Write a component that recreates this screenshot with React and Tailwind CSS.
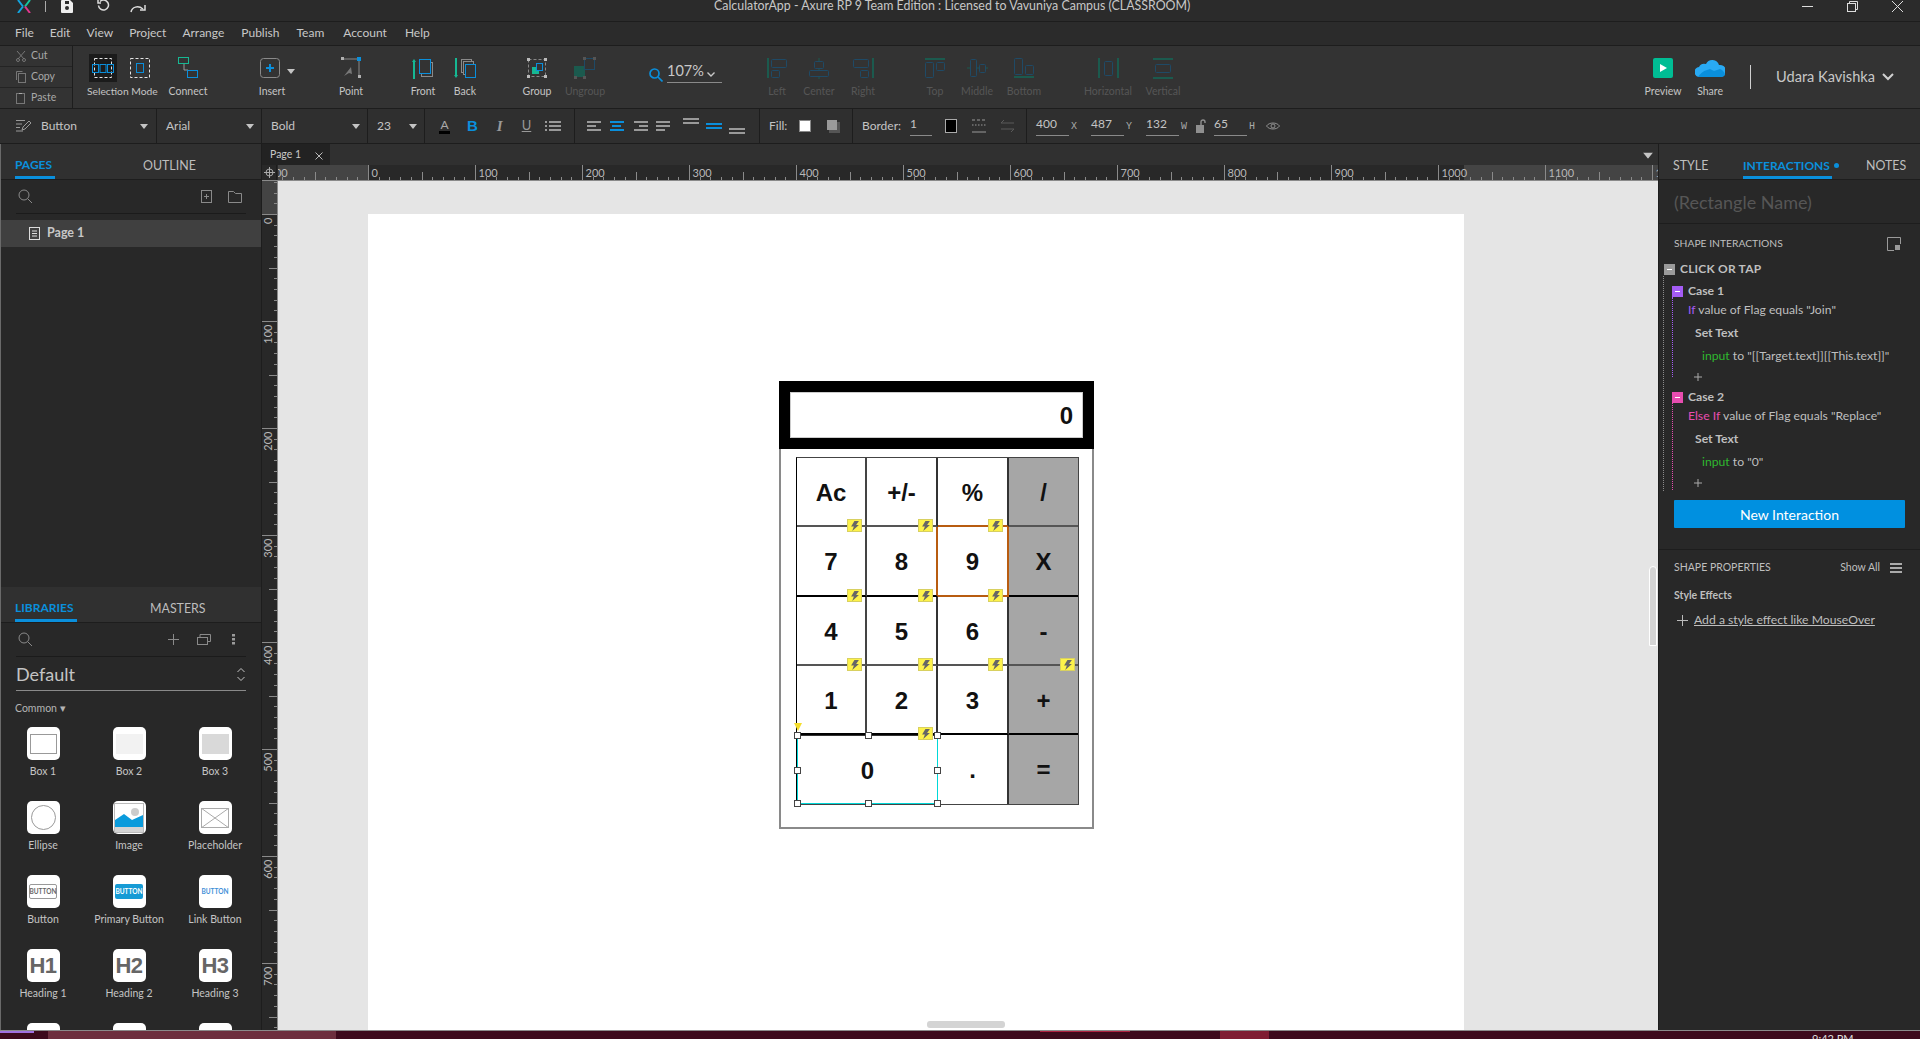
import { Fragment } from "react";

const Caret = ({ className = "" }) => (
  <svg width="8" height="5" viewBox="0 0 8 5" className={className}>
    <path d="M0 0h8L4 5z" fill="#c4c4c4" />
  </svg>
);

const Search = ({ className = "" }) => (
  <svg width="15" height="15" viewBox="0 0 15 15" fill="none" stroke="#8a8a8a" className={className}>
    <circle cx="6" cy="6" r="5" />
    <path d="M9.7 9.7 14 14" />
  </svg>
);

function Logo() {
  return (
    <svg width="14" height="14" viewBox="0 0 14 14" fill="none" strokeWidth="2">
      <path d="M1 0 6 6.5" stroke="#12a5e0" />
      <path d="M6 6.5 1 13" stroke="#12a5e0" />
      <path d="M13 0 8 6.5" stroke="#16c6a0" />
      <path d="M8 6.5 13 13" stroke="#e2378f" />
    </svg>
  );
}

const ICON_BLUE = "#0a8fdc";
const DIM_BLUE = "#1f4a66";
const DIM_GREEN = "#1b5a4e";

const Dash = ({ x, y, w, h }) => (
  <rect x={x} y={y} width={w} height={h} fill="none" stroke="#e4e4e4" strokeDasharray="3 2" />
);

function SelectionIcons() {
  return (
    <div className="flex items-center h-[28px]">
      <div className="w-[28px] h-[28px] ml-[16px] bg-[#1b1b1b] flex items-center justify-center">
        <svg width="22" height="20" viewBox="0 0 22 20" fill="none">
          <Dash x="2.5" y="0.5" w="17" h="19" />
          <rect x="0.5" y="6.5" width="6" height="8" stroke={ICON_BLUE} />
          <rect x="8" y="6.5" width="6" height="8" stroke={ICON_BLUE} />
          <rect x="15.5" y="6.5" width="6" height="8" stroke={ICON_BLUE} />
        </svg>
      </div>
      <svg width="20" height="20" viewBox="0 0 20 20" fill="none" className="ml-[13px]">
        <Dash x="0.5" y="0.5" w="19" h="19" />
        <rect x="6.5" y="5.5" width="7" height="9" stroke={ICON_BLUE} />
      </svg>
    </div>
  );
}

const ConnectIcon = () => (
  <svg width="20" height="22" viewBox="0 0 20 22" fill="none">
    <rect x="0.5" y="0.5" width="10" height="6" stroke="#16b893" />
    <path d="M6 7v6h4" stroke="#9a9a9a" />
    <rect x="9.5" y="13.5" width="10" height="7" stroke={ICON_BLUE} />
  </svg>
);

const InsertIcon = () => (
  <div className="flex items-center relative left-[-2px]">
    <svg width="20" height="20" viewBox="0 0 20 20" fill="none">
      <rect x="0.5" y="0.5" width="19" height="19" rx="3" stroke="#8a8a8a" />
      <path d="M10 6v8M6 10h8" stroke={ICON_BLUE} strokeWidth="2" />
    </svg>
    <Caret className="absolute left-[27px] top-[11px]" />
  </div>
);

const PointIcon = () => (
  <svg width="20" height="22" viewBox="0 0 20 22" fill="none">
    <path d="M2 2h16v18" stroke="#8a8a8a" />
    <rect x="0" y="0" width="3" height="3" fill="#b0b0b0" />
    <rect x="16" y="0" width="4" height="4" fill={ICON_BLUE} />
    <rect x="17" y="18" width="3" height="3" fill="#b0b0b0" />
    <path d="M3 19 10 10l1 7-3-1z" fill="#777" />
  </svg>
);

const FrontIcon = () => (
  <svg width="22" height="22" viewBox="0 0 22 22" fill="none">
    <path d="M2 22V4" stroke="#16b893" strokeWidth="2" />
    <path d="M0 5l2-3 2 3z" fill="#16b893" />
    <rect x="9.5" y="5.5" width="11" height="14" stroke="#8a8a8a" />
    <rect x="7.5" y="2.5" width="11" height="14" fill="#333" stroke={ICON_BLUE} />
  </svg>
);

const BackIcon = () => (
  <svg width="22" height="22" viewBox="0 0 22 22" fill="none">
    <path d="M2 1v18" stroke="#16b893" strokeWidth="2" />
    <path d="M0 18l2 3 2-3z" fill="#16b893" />
    <rect x="7.5" y="2.5" width="10" height="13" stroke="#8a8a8a" />
    <rect x="9.5" y="4.5" width="10" height="13" fill="#333" stroke="#8a8a8a" />
    <rect x="11.5" y="7.5" width="10" height="13" fill="#333" stroke={ICON_BLUE} />
  </svg>
);

const GroupIcon = () => (
  <svg width="20" height="20" viewBox="0 0 20 20" fill="none">
    <rect x="1.5" y="1.5" width="17" height="17" stroke="#888" strokeDasharray="3 2" />
    <rect x="0" y="0" width="3" height="3" fill="#bbb" />
    <rect x="17" y="0" width="3" height="3" fill="#bbb" />
    <rect x="0" y="17" width="3" height="3" fill="#bbb" />
    <rect x="17" y="17" width="3" height="3" fill="#bbb" />
    <rect x="5" y="9" width="7" height="7" fill="#16b893" />
    <rect x="9.5" y="5.5" width="6" height="7" fill="#333" stroke={ICON_BLUE} />
  </svg>
);

const UngroupIcon = () => (
  <svg width="22" height="22" viewBox="0 0 22 22" fill="none">
    <rect x="0" y="9" width="11" height="11" fill={DIM_GREEN} />
    <rect x="10.5" y="1.5" width="10" height="11" stroke={DIM_BLUE} />
    <rect x="9" y="0" width="3" height="3" fill="#555" />
    <rect x="19" y="0" width="3" height="3" fill="#555" />
    <rect x="0" y="19" width="3" height="3" fill="#555" />
    <rect x="9" y="19" width="3" height="3" fill="#555" />
  </svg>
);

const LeftIcon = () => (
  <svg width="20" height="20" viewBox="0 0 20 20" fill="none">
    <path d="M1 0v20" stroke={DIM_GREEN} strokeWidth="2" />
    <rect x="4.5" y="1.5" width="15" height="8" rx="1" stroke={DIM_BLUE} />
    <rect x="4.5" y="12.5" width="8" height="7" rx="1" stroke={DIM_BLUE} />
  </svg>
);

const CenterIcon = () => (
  <svg width="20" height="21" viewBox="0 0 20 21" fill="none">
    <path d="M10 0v21" stroke={DIM_GREEN} />
    <rect x="5.5" y="3.5" width="9" height="7" rx="1" fill="#333" stroke={DIM_BLUE} />
    <rect x="0.5" y="12.5" width="19" height="6" rx="1" fill="#333" stroke={DIM_BLUE} />
  </svg>
);

const RightIcon = () => (
  <svg width="21" height="20" viewBox="0 0 21 20" fill="none">
    <path d="M20 0v20" stroke={DIM_GREEN} strokeWidth="2" />
    <rect x="0.5" y="1.5" width="15" height="8" rx="1" stroke={DIM_BLUE} />
    <rect x="7.5" y="12.5" width="8" height="7" rx="1" stroke={DIM_BLUE} />
  </svg>
);

const TopIcon = () => (
  <svg width="20" height="20" viewBox="0 0 20 20" fill="none">
    <path d="M0 1h20" stroke={DIM_GREEN} strokeWidth="2" />
    <rect x="0.5" y="4.5" width="8" height="15" rx="1" stroke={DIM_BLUE} />
    <rect x="11.5" y="4.5" width="8" height="8" rx="1" stroke={DIM_BLUE} />
  </svg>
);

const MiddleIcon = () => (
  <svg width="21" height="20" viewBox="0 0 21 20" fill="none">
    <path d="M0 10h21" stroke={DIM_GREEN} />
    <rect x="3.5" y="1.5" width="6" height="17" rx="1" fill="#333" stroke={DIM_BLUE} />
    <rect x="12.5" y="6.5" width="6" height="8" rx="1" fill="#333" stroke={DIM_BLUE} />
  </svg>
);

const BottomIcon = () => (
  <svg width="20" height="20" viewBox="0 0 20 20" fill="none">
    <path d="M0 19h20" stroke={DIM_GREEN} strokeWidth="2" />
    <rect x="0.5" y="0.5" width="8" height="16" rx="1" stroke={DIM_BLUE} />
    <rect x="11.5" y="7.5" width="8" height="9" rx="1" stroke={DIM_BLUE} />
  </svg>
);

const HorizontalIcon = () => (
  <svg width="21" height="20" viewBox="0 0 21 20" fill="none">
    <path d="M1 0v20M20 0v20" stroke={DIM_GREEN} strokeWidth="2" />
    <rect x="6.5" y="3.5" width="8" height="14" rx="1" stroke={DIM_BLUE} />
  </svg>
);

const VerticalIcon = () => (
  <svg width="20" height="21" viewBox="0 0 20 21" fill="none">
    <path d="M0 1h20M0 20h20" stroke={DIM_GREEN} strokeWidth="2" />
    <rect x="2.5" y="6.5" width="15" height="8" rx="1" stroke={DIM_BLUE} />
  </svg>
);

const PreviewIcon = () => (
  <div className="w-[20px] h-[20px] rounded-[2px] bg-[#00bd94] flex items-center justify-center">
    <svg width="7" height="8" viewBox="0 0 7 8">
      <path d="M0 0l7 4-7 4z" fill="#fff" />
    </svg>
  </div>
);

const CloudIcon = () => (
  <svg width="30" height="20" viewBox="0 0 30 20">
    <path d="M5 19a5 5 0 0 1-1-10 6 6 0 0 1 7-3 7 7 0 0 1 13 1 6 6 0 0 1 2 12z" fill="#29aaf4" />
    <path d="M3 19c2-3 5-6 9-7l3-1 4 2 6-2c3 1 5 4 5 6-1 1-2 2-4 2z" fill="#0a8fdc" />
  </svg>
);

function Tool({ label, dim, className = "", children }) {
  return (
    <div className={`w-[40px] flex flex-col items-center relative ${className}`}>
      <div className="h-[28px] flex items-center justify-center">{children}</div>
      <span className={`mt-[2px] text-[10.5px] leading-[14px] whitespace-nowrap ${dim ? "text-[#565656]" : "text-[#c4c4c4]"}`}>
        {label}
      </span>
    </div>
  );
}

function TitleBar() {
  return (
    <div className="h-[22px] shrink-0 bg-[#2b2b2b] border-b border-[#1d1d1d] flex items-start relative overflow-hidden">
      <div className="ml-[17px] flex items-center h-[13px] overflow-hidden">
        <Logo />
      </div>
      <div className="ml-[14px] w-px h-[11px] mt-px bg-[#aaa]" />
      <svg width="13" height="13" viewBox="0 0 13 13" className="ml-[15px]">
        <path d="M1 0h8l3 3v9a1 1 0 0 1-1 1H1a1 1 0 0 1-1-1V1a1 1 0 0 1 1-1z" fill="#eee" />
        <rect x="4" y="1" width="4" height="3" fill="#2b2b2b" />
        <circle cx="6" cy="8" r="2" fill="#2b2b2b" />
      </svg>
      <svg width="13" height="13" viewBox="0 0 13 13" fill="none" stroke="#ddd" strokeWidth="1.5" className="ml-[23px]">
        <path d="M3 1.5a5 5 0 1 1-1.5 4" />
        <path d="M1 0v3h3" />
      </svg>
      <svg width="16" height="10" viewBox="0 0 16 10" fill="none" stroke="#ddd" strokeWidth="1.5" className="ml-[20px] mt-[3px]">
        <path d="M1 9c1-5 7-7 12-3" />
        <path d="M15 2v5h-5" />
      </svg>
      <span className="absolute left-[714px] top-0 text-[12.4px] leading-[12px] text-[#c8c8c8] whitespace-nowrap">
        CalculatorApp - Axure RP 9 Team Edition : Licensed to Vavuniya Campus (CLASSROOM)
      </span>
      <div className="ml-auto flex items-start mr-[17px]">
        <div className="w-[11px] h-px mt-[6px] bg-[#ddd]" />
        <svg width="11" height="11" viewBox="0 0 11 11" fill="none" stroke="#ddd" className="ml-[34px] mt-px">
          <rect x="0.5" y="2.5" width="8" height="8" />
          <path d="M2.5 2.5v-2h8v8h-2" />
        </svg>
        <svg width="11" height="11" viewBox="0 0 11 11" fill="none" stroke="#ddd" className="ml-[34px] mt-px">
          <path d="M0 0l11 11M11 0 0 11" />
        </svg>
      </div>
    </div>
  );
}

function MenuBar() {
  const items = [
    { label: "File" },
    { label: "Edit" },
    { label: "View" },
    { label: "Project" },
    { label: "Arrange" },
    { label: "Publish", cls: "ml-px" },
    { label: "Team", cls: "ml-px" },
    { label: "Account", cls: "ml-[3px]" },
    { label: "Help", cls: "ml-[2px]" },
  ];
  return (
    <div className="h-[24px] shrink-0 bg-[#2b2b2b] border-b border-[#1d1d1d] flex items-center gap-[16px] pl-[15px] pb-[1px]">
      {items.map((item) => (
        <span key={item.label} className={`text-[12px] text-[#c8c8c8] ${item.cls || ""}`}>
          {item.label}
        </span>
      ))}
    </div>
  );
}

function Clipboard() {
  const rows = [
    {
      label: "Cut",
      icon: (
        <svg width="10" height="11" viewBox="0 0 10 11" fill="none" stroke="#777">
          <path d="M1 0l7 8M9 0 2 8" />
          <circle cx="2" cy="9" r="1.5" />
          <circle cx="8" cy="9" r="1.5" />
        </svg>
      ),
    },
    {
      label: "Copy",
      icon: (
        <svg width="10" height="12" viewBox="0 0 10 12" fill="none" stroke="#777">
          <rect x="2.5" y="2.5" width="7" height="9" />
          <path d="M0.5 9V0.5h6" />
        </svg>
      ),
    },
    {
      label: "Paste",
      icon: (
        <svg width="10" height="12" viewBox="0 0 10 12" fill="none" stroke="#777">
          <rect x="0.5" y="1.5" width="8" height="10" />
          <path d="M3 1.5h3" stroke="#aaa" />
        </svg>
      ),
    },
  ];
  return (
    <div className="w-[73px] shrink-0 border-r border-[#1d1d1d] flex flex-col">
      {rows.map((row, i) => (
        <div key={row.label} className={`flex-1 flex items-center gap-[5px] pl-[16px] ${i < 2 ? "border-b border-[#242424]" : ""}`}>
          {row.icon}
          <span className="text-[10.5px] text-[#a8a8a8]">{row.label}</span>
        </div>
      ))}
    </div>
  );
}

function Toolbar() {
  return (
    <div className="h-[63px] shrink-0 bg-[#333333] border-b border-[#1d1d1d] flex">
      <Clipboard />
      <div className="flex-1 flex pt-[8px]">
        <div className="w-[95px] flex flex-col">
          <SelectionIcons />
          <span className="mt-[2px] pl-[14px] text-[10.3px] leading-[14px] text-[#c4c4c4] whitespace-nowrap">Selection Mode</span>
        </div>
        <Tool label="Connect"><ConnectIcon /></Tool>
        <Tool label="Insert" className="ml-[44px]"><InsertIcon /></Tool>
        <Tool label="Point" className="ml-[39px]"><PointIcon /></Tool>
        <Tool label="Front" className="ml-[32px]"><FrontIcon /></Tool>
        <Tool label="Back" className="ml-[2px]"><BackIcon /></Tool>
        <Tool label="Group" className="ml-[32px]"><GroupIcon /></Tool>
        <Tool label="Ungroup" dim className="ml-[8px]"><UngroupIcon /></Tool>
        <div className="w-[73px] ml-[44px] h-[21px] mt-[8px] flex items-center">
          <svg width="14" height="14" viewBox="0 0 14 14" fill="none" stroke={ICON_BLUE} strokeWidth="1.7" className="mt-[4px] shrink-0">
            <circle cx="5.5" cy="5.5" r="4.5" />
            <path d="M9 9l4.5 4.5" />
          </svg>
          <div className="ml-[4px] flex-1 h-full border-b border-[#8a8a8a] flex items-center gap-[3px] pb-[2px]">
            <span className="text-[14.5px] text-[#c8c8c8]">107%</span>
            <svg width="8" height="5" viewBox="0 0 8 5" fill="none" stroke="#c8c8c8" strokeWidth="1.4" className="mt-[7px]">
              <path d="M0.5 0.5 4 4l3.500-3.500" />
            </svg>
          </div>
        </div>
        <Tool label="Left" dim className="ml-[35px]"><LeftIcon /></Tool>
        <Tool label="Center" dim className="ml-[2px]"><CenterIcon /></Tool>
        <Tool label="Right" dim className="ml-[4px]"><RightIcon /></Tool>
        <Tool label="Top" dim className="ml-[32px]"><TopIcon /></Tool>
        <Tool label="Middle" dim className="ml-[2px]"><MiddleIcon /></Tool>
        <Tool label="Bottom" dim className="ml-[7px]"><BottomIcon /></Tool>
        <Tool label="Horizontal" dim className="ml-[44px]"><HorizontalIcon /></Tool>
        <Tool label="Vertical" dim className="ml-[15px]"><VerticalIcon /></Tool>
        <div className="ml-auto flex">
          <Tool label="Preview"><PreviewIcon /></Tool>
          <Tool label="Share" className="ml-[7px]"><CloudIcon /></Tool>
          <div className="w-px h-[24px] mt-[11px] ml-[20px] bg-[#d0d0d0]" />
          <div className="flex items-center h-[24px] mt-[11px] ml-[25px] mr-[26px]">
            <span className="text-[14.6px] text-[#c8c8c8] whitespace-nowrap">Udara Kavishka</span>
            <svg width="12" height="8" viewBox="0 0 12 8" fill="none" stroke="#d0d0d0" strokeWidth="2" className="ml-[7px]">
              <path d="M1 1l5 5 5-5" />
            </svg>
          </div>
        </div>
      </div>
    </div>
  );
}

const Bars = ({ rows, className = "", color = "#9a9a9a" }) => (
  <div className={`flex flex-col gap-[2px] ${className}`}>
    {rows.map((r, i) => (
      <div key={i} className="h-[2px]" style={{ width: r.w, marginLeft: r.l || 0, background: color }} />
    ))}
  </div>
);

function Select({ label, width, pad, caretClass }) {
  return (
    <div className="h-full shrink-0 border-r border-[#1d1d1d] flex items-center relative" style={{ width, paddingLeft: pad }}>
      <span className="text-[12px] text-[#c4c4c4]">{label}</span>
      <Caret className={`absolute top-[15px] ${caretClass}`} />
    </div>
  );
}

function NumField({ value, letter, className = "" }) {
  return (
    <div className={`flex items-center ${className}`}>
      <div className="w-[33px] h-[20px] border-b border-[#8a8a8a] text-[12px] leading-[15px] text-[#c4c4c4]">{value}</div>
      <span className="ml-[2px] w-[10px] text-[10px] text-[#aaa] font-['Liberation_Mono',monospace]">{letter}</span>
    </div>
  );
}

function FormatBar() {
  return (
    <div className="h-[35px] shrink-0 bg-[#2f2f2f] border-b border-[#1d1d1d] flex items-center">
      <div className="w-[157px] h-full shrink-0 border-r border-[#1d1d1d] flex items-center pl-[16px] relative">
        <svg width="15" height="14" viewBox="0 0 15 14" fill="none" stroke="#9a9a9a">
          <path d="M0 1.500h9M0 5h6M0 8.500h4M0 12h7" />
          <path d="M6 11l1-3 6-6 2 2-6 6z" />
        </svg>
        <span className="ml-[10px] text-[12px] text-[#c4c4c4]">Button</span>
        <Caret className="absolute top-[15px] left-[140px]" />
      </div>
      <Select label="Arial" width={105} pad={9} caretClass="left-[89px]" />
      <Select label="Bold" width={106} pad={9} caretClass="left-[90px]" />
      <Select label="23" width={57} pad={9} caretClass="left-[41px]" />
      <div className="w-[150px] h-full shrink-0 border-r border-[#1d1d1d] flex items-center pl-[14px]">
        <div className="w-[11px] flex flex-col items-center">
          <span className="text-[12px] leading-[11px] text-[#aaa]">A</span>
          <div className="w-[11px] h-[3px] bg-black mt-[1px]" />
        </div>
        <span className="ml-[17px] text-[15px] font-bold text-[#0a8fdc] font-['Liberation_Sans',sans-serif]">B</span>
        <span className="ml-[19px] text-[15px] italic font-bold text-[#999] font-['Liberation_Serif',serif]">I</span>
        <span className="ml-[19px] text-[13px] underline text-[#999]">U</span>
        <svg width="16" height="12" viewBox="0 0 16 12" className="ml-[14px]">
          <path d="M0 1h2v2H0zM0 5h2v2H0zM0 9h2v2H0zM4 1h12v2H4zM4 5h12v2H4zM4 9h12v2H4z" fill="#999" />
        </svg>
      </div>
      <div className="w-[185px] h-full shrink-0 border-r border-[#1d1d1d] flex items-center pl-[12px]">
        <Bars rows={[{ w: 14 }, { w: 9 }, { w: 14 }]} />
        <Bars color="#0a8fdc" className="ml-[9px]" rows={[{ w: 14 }, { w: 9, l: 2 }, { w: 14 }]} />
        <Bars className="ml-[10px]" rows={[{ w: 14 }, { w: 9, l: 5 }, { w: 14 }]} />
        <Bars className="ml-[8px]" rows={[{ w: 14 }, { w: 14 }, { w: 9 }]} />
        <Bars className="ml-[13px] mb-[10px]" rows={[{ w: 16 }, { w: 16 }]} />
        <Bars color="#0a8fdc" className="ml-[7px]" rows={[{ w: 16 }, { w: 16 }]} />
        <Bars className="ml-[7px] mt-[10px]" rows={[{ w: 16 }, { w: 16 }]} />
      </div>
      <div className="w-[93px] h-full shrink-0 border-r border-[#1d1d1d] flex items-center pl-[9px]">
        <span className="text-[12px] text-[#c4c4c4]">Fill:</span>
        <div className="ml-[12px] w-[12px] h-[12px] bg-white border border-[#888]" />
        <div className="ml-[16px] relative w-[13px] h-[13px]">
          <div className="absolute left-[2px] top-[2px] w-[11px] h-[11px] bg-[#555]" />
          <div className="absolute left-0 top-0 w-[10px] h-[10px] bg-[#9a9a9a]" />
        </div>
      </div>
      <div className="w-[174px] h-full shrink-0 border-r border-[#1d1d1d] flex items-center pl-[9px]">
        <span className="text-[12px] text-[#c4c4c4]">Border:</span>
        <div className="ml-[9px] w-[22px] h-[20px] border-b border-[#8a8a8a] text-[12px] leading-[15px] text-[#c4c4c4]">1</div>
        <div className="ml-[13px] w-[12px] h-[14px] bg-black border border-[#aaa]" />
        <svg width="15" height="14" viewBox="0 0 15 14" fill="none" stroke="#9a9a9a" className="ml-[15px]">
          <path d="M0 1h3M5 1h3M10 1h3M0 6h1.500M3 6h1.500M6 6h1.500M9 6h1.500M12 6h1.500M0 13h14" />
        </svg>
        <svg width="15" height="14" viewBox="0 0 15 14" fill="none" stroke="#5a5a5a" className="ml-[13px]">
          <path d="M1 4h13M1 4l3-3M1 10h13M14 10l-3 3" />
        </svg>
      </div>
      <NumField value="400" letter="X" className="ml-[9px]" />
      <NumField value="487" letter="Y" className="ml-[10px]" />
      <NumField value="132" letter="W" className="ml-[10px]" />
      <svg width="10" height="14" viewBox="0 0 10 14" fill="none" className="ml-[5px]">
        <rect x="0" y="6" width="8" height="8" fill="#8f8f8f" />
        <path d="M5 6V3a2 2 0 0 1 4 0v1" stroke="#8f8f8f" strokeWidth="1.4" />
      </svg>
      <NumField value="65" letter="H" className="ml-[8px]" />
      <svg width="14" height="10" viewBox="0 0 14 10" fill="none" stroke="#8f8f8f" className="ml-[7px]">
        <path d="M0.500 5C3 1 11 1 13.500 5 11 9 3 9 0.500 5z" />
        <circle cx="7" cy="5" r="2" />
      </svg>
    </div>
  );
}

function PanelTabs({ left, right, underlineClass, rightClass }) {
  return (
    <div className="h-[36px] shrink-0 bg-[#303030] border-b border-[#1d1d1d] relative flex items-center">
      <span className="ml-[14px] pt-[6px] text-[12px] font-bold text-[#0a8fdc]">{left}</span>
      <span className={`absolute top-[13px] text-[12.4px] text-[#bdbdbd] ${rightClass}`}>{right}</span>
      <div className={`absolute left-[14px] bottom-0 h-[3px] bg-[#0a8fdc] ${underlineClass}`} />
    </div>
  );
}

function LibTile({ label, children }) {
  return (
    <div className="h-[74px] flex flex-col items-center">
      <div className="w-[33px] h-[33px] rounded-[5px] bg-white flex items-center justify-center overflow-hidden shrink-0">{children}</div>
      <span className="mt-[4px] text-[10.5px] leading-[14px] text-[#c4c4c4] whitespace-nowrap">{label}</span>
    </div>
  );
}

const Heading = ({ children }) => (
  <span className="text-[22px] font-bold text-[#666] tracking-[-0.5px] font-['Liberation_Sans',sans-serif]">{children}</span>
);

function LeftPanel() {
  return (
    <div className="w-[262px] shrink-0 bg-[#282828] border-r border-[#1d1d1d] border-l border-l-[#6a6a6a] flex flex-col overflow-hidden">
      <div className="h-[443px] shrink-0 flex flex-col">
        <PanelTabs left="PAGES" right="OUTLINE" underlineClass="w-[40px]" rightClass="left-[142px]" />
        <div className="mx-[15px] h-[34px] border-b border-[#1b1b1b] flex items-center px-[2px] shrink-0">
          <Search />
          <svg width="13" height="13" viewBox="0 0 13 13" fill="none" stroke="#8a8a8a" className="ml-auto">
            <rect x="1.5" y="0.5" width="10" height="12" />
            <path d="M6.500 4v5M4 6.500h5" />
          </svg>
          <svg width="14" height="12" viewBox="0 0 14 12" fill="none" stroke="#8a8a8a" className="ml-[15px] mr-[2px]">
            <path d="M0.500 11.500V0.500h5l2 2h6v9z" />
          </svg>
        </div>
        <div className="h-[27px] mt-[6px] bg-[#404040] flex items-center pl-[28px] shrink-0">
          <svg width="11" height="13" viewBox="0 0 11 13" fill="none" stroke="#ddd">
            <rect x="0.500" y="0.500" width="10" height="12" />
            <path d="M3 4h5M3 6.500h5M3 9h5" />
          </svg>
          <span className="ml-[7px] text-[12.5px] font-bold text-[#c8c8c8]">Page 1</span>
        </div>
      </div>
      <div className="flex-1 min-h-0 flex flex-col overflow-hidden">
        <PanelTabs left="LIBRARIES" right="MASTERS" underlineClass="w-[62px]" rightClass="left-[149px]" />
        <div className="mx-[15px] h-[34px] border-b border-[#1b1b1b] flex items-center px-[2px] shrink-0">
          <Search />
          <svg width="11" height="11" viewBox="0 0 11 11" fill="none" stroke="#8a8a8a" className="ml-auto">
            <path d="M5.500 0v11M0 5.500h11" />
          </svg>
          <svg width="14" height="11" viewBox="0 0 14 11" fill="none" stroke="#8a8a8a" className="ml-[18px]">
            <rect x="0.500" y="3.500" width="10" height="7" />
            <path d="M3 3.500v-3h10.500v7h-3" />
          </svg>
          <svg width="3" height="11" viewBox="0 0 3 11" className="ml-[21px] mr-[9px]">
            <path d="M0 0h3v2.500H0zM0 4h3v2.500H0zM0 8h3v2.500H0z" fill="#9a9a9a" />
          </svg>
        </div>
        <div className="mx-[15px] h-[34px] pt-[2px] border-b border-[#8a8a8a] flex items-center justify-between shrink-0">
          <span className="text-[18px] text-[#c4c4c4]">Default</span>
          <svg width="8" height="13" viewBox="0 0 8 13" fill="none" stroke="#c4c4c4" className="mr-[1px]">
            <path d="M0.500 4 4 0.500 7.500 4M0.500 9 4 12.500 7.500 9" />
          </svg>
        </div>
        <div className="h-[36px] pl-[14px] pt-[10px] text-[10.5px] leading-[14px] text-[#b4b4b4] shrink-0">Common ▾</div>
        <div className="grid grid-cols-[86px_86px_86px] -ml-px">
          <LibTile label="Box 1"><div className="w-[27px] h-[20px] border border-[#999]" /></LibTile>
          <LibTile label="Box 2"><div className="w-[27px] h-[20px] bg-[#f2f2f2]" /></LibTile>
          <LibTile label="Box 3"><div className="w-[27px] h-[20px] bg-[#d9d9d9]" /></LibTile>
          <LibTile label="Ellipse"><div className="w-[25px] h-[25px] rounded-full border border-[#999]" /></LibTile>
          <LibTile label="Image">
            <svg width="30" height="30" viewBox="0 0 30 30">
              <rect x="0.500" y="0.500" width="29" height="29" fill="#fff" stroke="#bbb" />
              <circle cx="21" cy="9" r="4" fill="#ccc" />
              <path d="M1 17l9-6 8 6 11-5v12H1z" fill="#0a9bdc" />
              <rect x="1" y="24" width="28" height="5" fill="#d4d4d4" />
            </svg>
          </LibTile>
          <LibTile label="Placeholder">
            <svg width="28" height="20" viewBox="0 0 28 20" fill="none" stroke="#aaa">
              <rect x="0.500" y="0.500" width="27" height="19" />
              <path d="M0 0l28 20M28 0 0 20" />
            </svg>
          </LibTile>
          <LibTile label="Button">
            <div className="w-[28px] h-[15px] rounded-[2px] border border-[#999] flex items-center justify-center text-[6.5px] font-bold text-[#666]">BUTTON</div>
          </LibTile>
          <LibTile label="Primary Button">
            <div className="w-[28px] h-[15px] rounded-[2px] bg-[#169bd5] flex items-center justify-center text-[6.5px] font-bold text-white">BUTTON</div>
          </LibTile>
          <LibTile label="Link Button">
            <span className="text-[6.5px] font-bold text-[#3f8fd8]">BUTTON</span>
          </LibTile>
          <LibTile label="Heading 1"><Heading>H1</Heading></LibTile>
          <LibTile label="Heading 2"><Heading>H2</Heading></LibTile>
          <LibTile label="Heading 3"><Heading>H3</Heading></LibTile>
          <LibTile label="" />
          <LibTile label="" />
          <LibTile label="" />
        </div>
      </div>
    </div>
  );
}

const H_TICKS = Array.from({ length: 135 }, (_, i) => i - 10);

function HRuler() {
  return (
    <svg width="1380" height="15" className="block" fontFamily="Lato, sans-serif">
      <rect x="0" y="0" width="90" height="15" fill="#444" />
      <rect x="1186" y="0" width="194" height="15" fill="#444" />
      {H_TICKS.map((t) => {
        const x = Math.round(90 + t * 10.7) + 0.5;
        const major = t % 10 === 0;
        const mid = t % 5 === 0;
        return (
          <Fragment key={t}>
            <line x1={x} x2={x} y1={major ? 0 : mid ? 7 : 12} y2="15" stroke="#8a8a8a" />
            {major && (
              <text x={x + 3} y="12" fontSize="11" fill="#b8b8b8">
                {t * 10}
              </text>
            )}
          </Fragment>
        );
      })}
    </svg>
  );
}

function VRuler() {
  return (
    <svg width="15" height="848" className="block" fontFamily="Lato, sans-serif">
      <rect x="0" y="0" width="15" height="33" fill="#444" />
      {Array.from({ length: 82 }, (_, i) => i - 3).map((t) => {
        const y = Math.round(33 + t * 10.7) + 0.5;
        const major = t % 10 === 0;
        const mid = t % 5 === 0;
        return (
          <Fragment key={t}>
            <line y1={y} y2={y} x1={major ? 0 : mid ? 7 : 12} x2="15" stroke="#8a8a8a" />
            {major && t >= 0 && (
              <text x="10" y={y + 3} fontSize="11" fill="#b8b8b8" textAnchor="end" transform={`rotate(-90 10 ${y + 3})`}>
                {t * 10}
              </text>
            )}
          </Fragment>
        );
      })}
    </svg>
  );
}

const Bolt = ({ className = "" }) => (
  <div className={`absolute z-10 w-[15px] h-[13px] bg-[#fdf24a] border border-[#d8d060] flex items-center justify-center ${className}`}>
    <svg width="8" height="10" viewBox="0 0 7 9">
      <path d="M3 0h4L4.500 3.500H7L1 9l1.500-4H0z" fill="#666" />
    </svg>
  </div>
);

const CELLS = [
  { t: "Ac", b: "border-b-2 border-b-[#555]", r: "border-r-2 border-r-[#444]", bolt: "right-[3px] -bottom-[7px]" },
  { t: "+/-", b: "border-b-2 border-b-[#555]", r: "border-r-2 border-r-[#333]", bolt: "right-[3px] -bottom-[7px]" },
  { t: "%", b: "border-b-2 border-b-[#b85c10]", r: "border-r-2 border-r-[#333]", bolt: "right-[4px] -bottom-[7px]" },
  { t: "/", b: "border-b-2 border-b-[#555]", r: "", gray: true },
  { t: "7", b: "border-b-2 border-b-black", r: "border-r-2 border-r-[#444]", bolt: "right-[3px] -bottom-[7px]" },
  { t: "8", b: "border-b-2 border-b-black", r: "border-r-2 border-r-[#b85c10]", bolt: "right-[3px] -bottom-[7px]" },
  { t: "9", b: "border-b-2 border-b-[#b85c10]", r: "border-r-2 border-r-[#b85c10]", bolt: "right-[4px] -bottom-[7px]" },
  { t: "X", b: "border-b-2 border-b-black", r: "", gray: true },
  { t: "4", b: "border-b-2 border-b-[#555]", r: "border-r-2 border-r-[#444]", bolt: "right-[3px] -bottom-[7px]" },
  { t: "5", b: "border-b-2 border-b-[#555]", r: "border-r-2 border-r-[#333]", bolt: "right-[3px] -bottom-[7px]" },
  { t: "6", b: "border-b-2 border-b-[#555]", r: "border-r-2 border-r-[#333]", bolt: "right-[4px] -bottom-[7px]" },
  { t: "-", b: "border-b-2 border-b-[#555]", r: "", gray: true, bolt: "right-[3px] -bottom-[7px]" },
  { t: "1", b: "border-b-2 border-b-black", r: "border-r-2 border-r-[#444]" },
  { t: "2", b: "border-b-2 border-b-black", r: "border-r-2 border-r-[#333]", bolt: "right-[3px] -bottom-[7px]" },
  { t: "3", b: "border-b-2 border-b-black", r: "border-r-2 border-r-[#333]" },
  { t: "+", b: "border-b-2 border-b-black", r: "", gray: true },
];

const Handle = ({ className }) => (
  <div className={`absolute z-20 w-[7px] h-[7px] bg-white border border-[#444] ${className}`} />
);

function Calculator() {
  return (
    <div className="w-[315px] h-[448px] border-2 border-[#8a8a8a] bg-white flex flex-col font-['Liberation_Sans',sans-serif] font-bold text-[24px] text-[#111]">
      <div className="h-[68px] -mx-[2px] -mt-[2px] bg-black flex items-center justify-center shrink-0">
        <div className="w-[293px] h-[46px] bg-white border border-[#ccc] flex items-center justify-end pr-[9px] pt-[2px]">0</div>
      </div>
      <div className="ml-[15px] mt-[8px] w-[283px] border border-[#444] border-l-black grid grid-cols-[70px_71px_71px_69px] grid-rows-[69px_70px_69px_69px_69px]">
        {CELLS.map((c) => (
          <div key={c.t} className={`relative flex items-center justify-center pt-[2px] ${c.b} ${c.r} ${c.gray ? "bg-[#a6a6a6]" : "bg-white"}`}>
            {c.t}
            {c.bolt && <Bolt className={c.bolt} />}
          </div>
        ))}
        <div className="col-span-2 relative flex items-center justify-center pt-[2px] border border-[#00d8d8] border-t-[#333]">
          0
          <div className="absolute z-20 -left-[4px] -top-[13px] w-0 h-0 border-l-[4px] border-r-[4px] border-t-[8px] border-l-transparent border-r-transparent border-t-[#f5de2c]" />
          <Handle className="-left-[4px] -top-[4px]" />
          <Handle className="left-[67px] -top-[4px]" />
          <Handle className="-right-[4px] -top-[4px]" />
          <Handle className="-left-[4px] top-[31px]" />
          <Handle className="-right-[4px] top-[31px]" />
          <Handle className="-left-[4px] -bottom-[4px]" />
          <Handle className="left-[67px] -bottom-[4px]" />
          <Handle className="-right-[4px] -bottom-[4px]" />
        </div>
        <div className="flex items-center justify-center border-r-2 border-r-[#333]">.</div>
        <div className="bg-[#a6a6a6] flex items-center justify-center">=</div>
      </div>
    </div>
  );
}

function Center() {
  return (
    <div className="flex-1 min-w-0 flex flex-col">
      <div className="h-[21px] shrink-0 bg-[#303030] flex items-stretch relative">
        <div className="w-[68px] bg-[#222] flex items-center pl-[8px] text-[10.5px] text-[#c8c8c8]">
          Page 1
          <svg width="8" height="8" viewBox="0 0 8 8" fill="none" stroke="#bbb" className="ml-auto mr-[7px] mt-[2px]">
            <path d="M0.500 0.500l7 7M7.500 0.500l-7 7" />
          </svg>
        </div>
        <Caret className="absolute right-[6px] top-[9px] scale-125" />
      </div>
      <div className="h-[16px] shrink-0 bg-[#282828] border-b border-[#8a8a8a] flex">
        <div className="w-[15px] shrink-0 flex items-center justify-center border-r border-[#1d1d1d]">
          <svg width="11" height="11" viewBox="0 0 11 11" fill="none" stroke="#aaa">
            <circle cx="5.500" cy="5.500" r="3.500" />
            <path d="M5.500 0v11M0 5.500h11" />
          </svg>
        </div>
        <div className="flex-1 overflow-hidden bg-[#282828] ml-px">
          <HRuler />
        </div>
      </div>
      <div className="flex-1 min-h-0 flex">
        <div className="w-[16px] shrink-0 bg-[#282828] border-r border-[#8a8a8a] overflow-hidden">
          <VRuler />
        </div>
        <div className="flex-1 min-w-0 bg-[#e5e5e5] pl-[90px] pt-[33px] relative overflow-hidden">
          <div className="w-[1096px] h-full bg-white pl-[411px] pt-[167px]">
            <Calculator />
          </div>
          <div className="absolute left-[649px] bottom-[2px] w-[78px] h-[7px] rounded-[3px] bg-[#d4d4d4]" />
          <div className="absolute right-[1px] top-[385px] w-[8px] h-[80px] rounded-t-[4px] bg-[#d4d4d4] border border-white" />
        </div>
      </div>
    </div>
  );
}

const MinusBox = ({ color }) => (
  <div className="w-[11px] h-[11px] flex items-center justify-center shrink-0" style={{ background: color }}>
    <div className="w-[5px] h-px bg-white" />
  </div>
);

function RightPanel() {
  return (
    <div className="w-[262px] shrink-0 bg-[#282828] border-l border-[#1d1d1d] relative flex flex-col overflow-hidden text-[#bfbfbf] text-[12.2px]">
      <div className="h-[36px] shrink-0 bg-[#303030] border-b border-[#1d1d1d] relative text-[12.4px]">
        <span className="absolute left-[14px] top-[13px]">STYLE</span>
        <span className="absolute left-[84px] top-[13px] text-[12px] font-bold text-[#0a8fdc]">INTERACTIONS</span>
        <div className="absolute left-[175px] top-[19px] w-[5px] h-[5px] rounded-full bg-[#0a8fdc]" />
        <span className="absolute left-[207px] top-[13px]">NOTES</span>
        <div className="absolute left-[84px] bottom-0 w-[89px] h-[3px] bg-[#0a8fdc]" />
      </div>
      <div className="h-[44px] shrink-0 border-b border-[#1d1d1d] flex items-center pl-[15px] pt-[2px] text-[18px] text-[#565656]">(Rectangle Name)</div>

      <div className="pt-[10px] shrink-0">
        <div className="h-[20px] flex items-center pl-[15px] pr-[19px] text-[10.3px]">
          <span>SHAPE INTERACTIONS</span>
          <svg width="14" height="14" viewBox="0 0 14 14" fill="none" stroke="#9a9a9a" className="ml-auto">
            <path d="M7 13.500H0.500V0.500h13V7" />
            <path d="M8 8h5v5H8z" fill="#9a9a9a" stroke="none" />
          </svg>
        </div>
        <div className="h-[30px] flex items-center pl-[5px]">
          <MinusBox color="#9a9a9a" />
          <span className="ml-[5px] font-bold text-[12px] tracking-[0.2px]">CLICK OR TAP</span>
        </div>
        <div className="h-[14px] flex items-center pl-[13px]">
          <MinusBox color="#a45cf5" />
          <span className="ml-[5px] font-bold">Case 1</span>
        </div>
        <div className="h-[24px] flex items-center pl-[29px]">
          <span className="text-[#a45cf5]">If</span>&nbsp;value of Flag equals "Join"
        </div>
        <div className="h-[22px] flex items-center pl-[36px] font-bold">Set Text</div>
        <div className="h-[24px] flex items-center pl-[43px]">
          <span className="text-[#2fb82f]">input</span>&nbsp;to "[[Target.text]][[This.text]]"
        </div>
        <div className="h-[18px] flex items-center pl-[35px]">
          <svg width="8" height="8" viewBox="0 0 8 8" stroke="#aaa"><path d="M4 0v8M0 4h8" /></svg>
        </div>
        <div className="h-[22px] flex items-center pl-[13px]">
          <MinusBox color="#e84db0" />
          <span className="ml-[5px] font-bold">Case 2</span>
        </div>
        <div className="h-[16px] flex items-center pl-[29px]">
          <span className="text-[#e84db0]">Else If</span>&nbsp;value of Flag equals "Replace"
        </div>
        <div className="h-[30px] flex items-center pl-[36px] font-bold">Set Text</div>
        <div className="h-[16px] flex items-center pl-[43px]">
          <span className="text-[#2fb82f]">input</span>&nbsp;to "0"
        </div>
        <div className="h-[26px] flex items-center pl-[35px]">
          <svg width="8" height="8" viewBox="0 0 8 8" stroke="#aaa"><path d="M4 0v8M0 4h8" /></svg>
        </div>
      </div>

      <div className="mt-[4px] mx-[15px] h-[28px] shrink-0 rounded-[1px] bg-[#0090e0] flex items-center justify-center text-[14px] text-white">New Interaction</div>

      <div className="mt-[21px] border-t border-[#1d1d1d] shrink-0">
        <div className="h-[36px] flex items-center pl-[15px] pr-[18px] text-[10.5px]">
          <span>SHAPE PROPERTIES</span>
          <span className="ml-auto mr-[10px]">Show All</span>
          <div className="flex flex-col gap-[2px]">
            <div className="w-[12px] h-[2px] bg-[#aaa]" />
            <div className="w-[12px] h-[2px] bg-[#aaa]" />
            <div className="w-[12px] h-[2px] bg-[#aaa]" />
          </div>
        </div>
        <div className="h-[20px] flex items-center pl-[15px] text-[10.5px] font-bold">Style Effects</div>
        <div className="h-[28px] flex items-center pl-[18px]">
          <svg width="11" height="11" viewBox="0 0 11 11" stroke="#bbb"><path d="M5.500 0v11M0 5.500h11" /></svg>
          <span className="ml-[6px] underline">Add a style effect like MouseOver</span>
        </div>
      </div>

      <div className="absolute left-[4px] top-[132px] h-[215px] border-l border-dotted border-[#8a8a8a]" />
      <div className="absolute left-[13px] top-[153px] h-[80px] border-l border-dotted border-[#a45cf5]" />
      <div className="absolute left-[13px] top-[259px] h-[87px] border-l border-dotted border-[#e84db0]" />
    </div>
  );
}

function Taskbar() {
  return (
    <div className="h-[9px] shrink-0 bg-[#3d0a1c] border-t border-[#8a8a8a] relative overflow-hidden">
      <div className="absolute left-0 top-0 w-[34px] h-[2px] bg-[#a070e0]" />
      <div className="absolute left-[48px] top-0 w-[288px] h-full bg-[#6d2f3e]" />
      <div className="absolute left-[1040px] top-0 w-[90px] h-[1px] bg-[#b02040]" />
      <div className="absolute left-[1220px] top-0 w-[49px] h-full bg-[#7f1d32]" />
      <span className="absolute left-[1812px] top-[1px] text-[11px] leading-[13px] text-[#ddd]">9:42 PM</span>
    </div>
  );
}

export default function App() {
  return (
    <div className="w-[1920px] h-[1039px] overflow-hidden flex flex-col bg-[#282828] font-['Lato',sans-serif]">
      <TitleBar />
      <MenuBar />
      <Toolbar />
      <FormatBar />
      <div className="flex-1 min-h-0 flex">
        <LeftPanel />
        <Center />
        <RightPanel />
      </div>
      <Taskbar />
    </div>
  );
}
